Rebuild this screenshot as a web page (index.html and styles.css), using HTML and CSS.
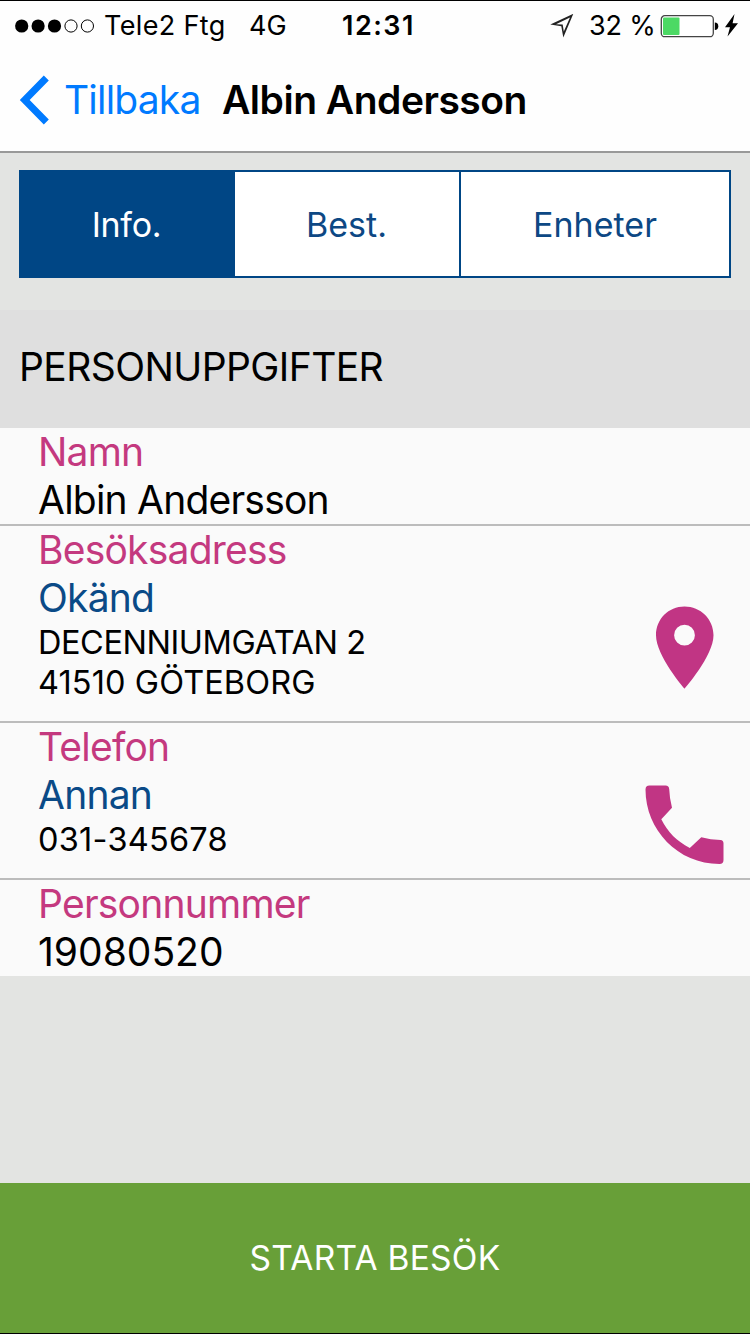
FILE: index.html
```html
<!DOCTYPE html>
<html lang="sv">
<head>
<meta charset="utf-8">
<title>Albin Andersson</title>
<link rel="stylesheet" href="styles.css">
</head>
<body>
<div class="screen">
  <header class="top">
    <div class="status">
      <svg class="signal" width="80" height="16" viewBox="0 0 80 16">
        <circle cx="6.7" cy="8" r="6.6"/><circle cx="23.1" cy="8" r="6.6"/><circle cx="39.5" cy="8" r="6.6"/>
        <g fill="none" stroke="#000" stroke-width="1"><circle cx="56" cy="8" r="6.1"/><circle cx="72.4" cy="8" r="6.1"/></g>
      </svg>
      <span class="carrier">Tele2 Ftg</span>
      <span class="network">4G</span>
      <time class="clock">12:31</time>
      <svg class="location" width="24" height="24" viewBox="0 0 24 24"><path d="M.3 10.500 23.300-.2 13.300 23.500 11.300 12.200ZM6 10.200 12.700 10.600 13.800 17.500 20 3.500Z" fill="#222" fill-rule="evenodd"/></svg>
      <span class="percent">32 %</span>
      <svg class="battery" width="80" height="24" viewBox="0 0 80 24">
        <rect x="1.3" y="1.700" width="52" height="21" rx="3.500" fill="#fff" stroke="#444" stroke-width="1.300"/>
        <rect x="3" y="3.500" width="16.500" height="17.500" rx="1" fill="#4cd964"/>
        <path d="M54.800 8.500q3.500 0 3.500 3.700t-3.500 3.700Z"/>
        <path d="M74.500 0 65 13.200h5L67.500 22.500 78 9.200h-5.400Z"/>
      </svg>
    </div>
    <nav class="nav">
      <svg class="chevron" width="30" height="50" viewBox="0 0 30 50"><path d="M27.300 3 5.700 25 27.300 47" fill="none" stroke="#007aff" stroke-width="7"/></svg>
      <a class="back">Tillbaka</a>
      <h1 class="title">Albin Andersson</h1>
    </nav>
  </header>
  <div class="tabs">
    <div class="tab tab-info"><span>Info.</span></div>
    <div class="tab tab-best"><span>Best.</span></div>
    <div class="tab tab-units"><span>Enheter</span></div>
  </div>
  <h2 class="section">PERSONUPPGIFTER</h2>
  <main class="list">
    <section class="row">
      <div><p class="label">Namn</p><p class="value">Albin Andersson</p></div>
    </section>
    <section class="row address">
      <div><p class="label">Besöksadress</p><p class="kind">Okänd</p><p class="detail street">DECENNIUMGATAN 2</p><p class="detail">41510 GÖTEBORG</p></div>
      <svg class="pin" width="60" height="84" viewBox="0 0 60 84"><path fill="#c13584" fill-rule="evenodd" d="M29.500.500C13.500.500 1 13 1 29.300 1 50 29.500 82.700 29.500 82.700S58.500 50 58.500 29.300C58.500 13 45.500.500 29.500.500ZM29.500 18.800a10.400 10.400 0 1 1 0 20.800 10.400 10.400 0 0 1 0-20.800Z"/></svg>
    </section>
    <section class="row telephone">
      <div><p class="label">Telefon</p><p class="kind">Annan</p><p class="detail number">031-345678</p></div>
      <svg class="phone" width="80" height="80" viewBox="0 0 80 80"><path fill="#c13584" d="M4.500.500H20.500Q24 .5 24.200 4 24.500 13 27 22.800L16.300 34.300C23 47.500 31.500 56 44.800 63L56.300 52.200Q65.500 54.600 75.500 55Q78.500 55.200 78.500 58.500V75Q78.500 79 74.500 79C33 79 .5 45 .5 4.500Q.5.500 4.500.500Z"/></svg>
    </section>
    <section class="row">
      <div><p class="label">Personnummer</p><p class="value digits">19080520</p></div>
    </section>
  </main>
  <button class="start">STARTA BESÖK</button>
</div>
</body>
</html>
```
FILE: styles.css
```css
* { box-sizing: border-box; margin: 0; padding: 0; }
body { font-family: Inter, "Liberation Sans", sans-serif; color: #000; }
.screen { width: 750px; height: 1334px; display: flex; flex-direction: column; background: #e3e4e2; border-top: 1px solid #000; border-bottom: 1px solid #000; white-space: nowrap; overflow: hidden; }
svg { flex: none; display: block; }
.top { height: 152px; background: #fefefe; border-bottom: 2px solid #999; }
.status { height: 49px; padding-left: 15px; display: flex; align-items: center; font-size: 27px; }
.carrier { width: 136px; margin-left: 9px; letter-spacing: .35px; }
.network { width: 83px; margin-left: 9px; }
.clock { width: 80px; margin-left: 10px; font-weight: 600; letter-spacing: 1.5px; }
.location { margin-left: 128px; }
.percent { width: 65px; margin-left: 15px; letter-spacing: -.2px; }
.battery { margin-left: 6px; }
.nav { height: 101px; padding: 0 0 1px 19px; display: flex; align-items: center; }
.back { width: 137px; margin: 0 0 2px 15px; font-size: 39px; letter-spacing: -.8px; color: #007aff; }
.title { margin: 0 0 2px 21px; font-size: 39px; font-weight: 600; letter-spacing: -.5px; }
.tabs { height: 108px; margin: 17px 19px 32px; flex: none; display: flex; border: 2px solid #004685; background: #fff; font-size: 34px; color: #0d4884; }
.tab { display: flex; align-items: center; justify-content: center; }
.tab-info { width: 214px; padding-right: 3px; background: #004685; color: #fff; letter-spacing: -.3px; }
.tab-best { width: 226px; border-right: 2px solid #004685; padding-right: 1px; }
.tab-units { flex: 1; }
.section { height: 118px; flex: none; padding: 0 0 5px 19px; display: flex; align-items: center; background: #dfdfdf; font-size: 39px; font-weight: 400; letter-spacing: -.58px; }
.list { background: #fafafa; }
.row { display: flex; justify-content: space-between; padding-left: 38px; }
.row + .row { border-top: 2px solid #bcbcbc; }
.label, .kind, .value { font-size: 39px; line-height: 48px; letter-spacing: -.78px; }
.label { color: #c4397f; }
.kind { color: #0a4a87; }
.digits { letter-spacing: 0; }
.address { height: 197px; }
.telephone { height: 157px; }
.detail { padding-top: 1px; font-size: 32.5px; line-height: 40px; letter-spacing: .1px; }
.detail + .detail { padding-top: 0; }
.street { letter-spacing: -.45px; }
.number { letter-spacing: .25px; }
.pin { margin: 80px 35px 0 0; }
.phone { margin: 62px 25px 0 0; }
.start { height: 150px; flex: none; margin-top: auto; border: 0; background: #689f38; color: #fff; font: 33.5px Inter, "Liberation Sans", sans-serif; letter-spacing: .25px; }
```
